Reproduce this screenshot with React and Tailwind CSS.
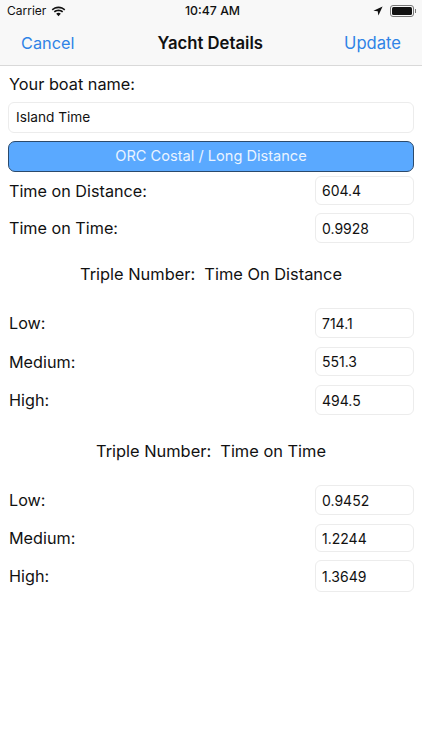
const font = { fontFamily: "Inter, 'Liberation Sans', sans-serif" };

function StatusBar() {
  return (
    <div className="relative flex h-[22px] items-center justify-between bg-[#f8f8f8] pl-[7px] pr-[6px] text-[#111]">
      <div className="flex items-center gap-[5px]">
        <span className="text-[12px]">Carrier</span>
        <svg width="15" height="11" viewBox="0 0 15 11" fill="#111">
          <path d="M7.5 2.2c2.2 0 4.2.9 5.7 2.3l1.1-1.2C12.5 1.5 10.1.4 7.5.4S2.5 1.5.7 3.3l1.1 1.2c1.5-1.4 3.5-2.3 5.7-2.3z" />
          <path d="M7.5 5.2c1.4 0 2.6.5 3.6 1.4l1.1-1.2C11 4.2 9.3 3.5 7.5 3.5s-3.5.7-4.7 1.9l1.1 1.2c1-.9 2.2-1.4 3.6-1.4z" />
          <path d="M7.5 6.8c-.9 0-1.7.3-2.3.9l2.3 2.6 2.3-2.6c-.6-.6-1.4-.9-2.3-.9z" />
        </svg>
      </div>
      <span className="absolute left-[185px] text-[12.3px] font-medium">10:47 AM</span>
      <div className="flex items-center gap-[7px]">
        <svg width="10" height="10" viewBox="0 0 10 10" fill="#111">
          <path d="M9.6.4.4 4.7l4.3.6.7 4.3z" />
        </svg>
        <div className="flex items-center">
          <div className="h-[12px] w-[24px] rounded-[3px] border border-[#777] p-[1px]">
            <div className="h-full w-full rounded-[1.5px] bg-[#111]" />
          </div>
          <div className="ml-[1px] h-[4px] w-[1px] bg-[#777]" />
        </div>
      </div>
    </div>
  );
}

function NavBar() {
  return (
    <div className="flex h-[44px] items-center justify-between border-b border-[#d9d9d9] bg-[#f8f8f8] pl-[21px] pr-[21px]">
      <span className="text-[16.3px] text-[#2f83e6]">Cancel</span>
      <span className="pl-[2px] text-[16.7px] font-semibold text-[#111]">Yacht Details</span>
      <span className="text-[16.6px] text-[#2f83e6]">Update</span>
    </div>
  );
}

function Field({ value, wide }) {
  return (
    <div className={`${wide ? "w-full pl-[7px] text-[13.7px]" : "w-[99px] pl-[6px] text-[14px]"} flex h-full items-center rounded-[6px] border border-[#ececec] bg-white text-[#111]`}>
      {value}
    </div>
  );
}

function Row({ label, value, height, gap }) {
  return (
    <div className={`flex items-center justify-between ${height} ${gap}`}>
      <span className="pl-[1px] pt-[1px] text-[16.2px] text-[#111]">{label}</span>
      <Field value={value} />
    </div>
  );
}

function Heading({ children }) {
  return <div className="text-center text-[16.4px] leading-[24px] text-[#111]">{children}</div>;
}

export default function App() {
  return (
    <div className="h-[750px] w-[422px] overflow-hidden bg-white" style={font}>
      <StatusBar />
      <NavBar />
      <div className="px-[8px]">
        <div className="mt-[6px] h-[24px] pl-[1px] text-[16.3px] leading-[24px] text-[#111]">Your boat name:</div>
        <div className="mt-[6px] h-[31px]">
          <Field value="Island Time" wide />
        </div>
        <div className="mt-[8px] flex h-[31px] items-center justify-center rounded-[7px] border border-[#2c4a6b] bg-[#5aa9ff] text-[14.6px] text-[#eaf4ff]">
          ORC Costal / Long Distance
        </div>
        <Row label="Time on Distance:" value="604.4" height="h-[29px]" gap="mt-[4px]" />
        <Row label="Time on Time:" value="0.9928" height="h-[30px]" gap="mt-[8px]" />
        <div className="mt-[19px]">
          <Heading>Triple Number:&nbsp; Time On Distance</Heading>
        </div>
        <Row label="Low:" value="714.1" height="h-[30px]" gap="mt-[22px]" />
        <Row label="Medium:" value="551.3" height="h-[29px]" gap="mt-[9px]" />
        <Row label="High:" value="494.5" height="h-[30px]" gap="mt-[9px]" />
        <div className="mt-[24px]">
          <Heading>Triple Number:&nbsp; Time on Time</Heading>
        </div>
        <Row label="Low:" value="0.9452" height="h-[30px]" gap="mt-[22px]" />
        <Row label="Medium:" value="1.2244" height="h-[28px]" gap="mt-[9px]" />
        <Row label="High:" value="1.3649" height="h-[32px]" gap="mt-[8px]" />
      </div>
    </div>
  );
}
